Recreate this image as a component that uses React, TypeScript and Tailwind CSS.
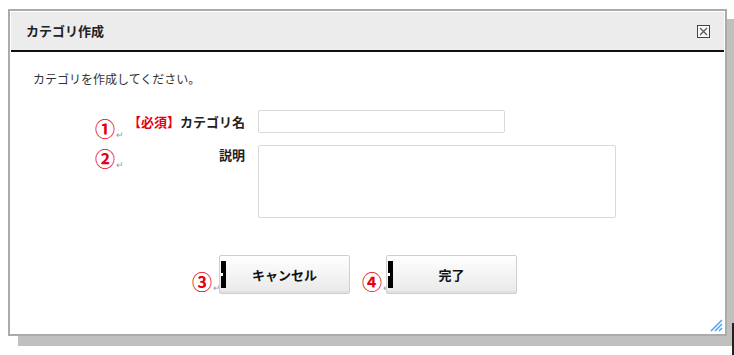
import React from "react";

const font = { fontFamily: '"Noto Sans CJK JP", "Liberation Sans", sans-serif' };

function Mark({ n }: { n: string }) {
  return (
    <span className="flex items-end leading-none">
      <span className="text-[20px] font-bold leading-none text-[#e60012]">{n}</span>
      <span className="ml-px text-[9px] leading-none text-[#999]">↵</span>
    </span>
  );
}

function CloseIcon() {
  return (
    <svg width="13" height="13" viewBox="0 0 13 13">
      <rect x="0.5" y="0.5" width="12" height="12" fill="#fafafa" stroke="#444" />
      <path d="M3 3 L10 10 M10 3 L3 10" stroke="#555" strokeWidth="1.2" />
    </svg>
  );
}

function Grip() {
  return (
    <svg width="13" height="13" viewBox="0 0 13 13">
      <path d="M1 12 L12 1 M5 12 L12 5 M9 12 L12 9" stroke="#58a8e8" strokeWidth="1.6" />
    </svg>
  );
}

function ActionButton({ label }: { label: string }) {
  return (
    <button className="flex h-[39px] w-[131px] items-stretch rounded-[2px] border border-[#cfcfcf] bg-gradient-to-b from-white to-[#e9e9e9] shadow-[inset_0_-2px_0_#e0e0e0]">
      <span className="relative my-[5px] ml-[1px] w-[5px] bg-black">
        <span className="absolute left-0 top-[12px] h-[3px] w-[2px] bg-white" />
      </span>
      <span className="flex flex-1 items-center justify-center pr-[6px] text-[13px] font-bold text-[#111]">
        {label}
      </span>
    </button>
  );
}

export default function App() {
  return (
    <div className="relative h-[355px] w-[734px] overflow-hidden bg-white" style={font}>
      <div className="ml-[8px] mt-[9px] h-[327px] w-[719px] border-2 border-[#ababab] bg-white p-px shadow-[10px_10px_0_#c0c0c0]">
        <div className="relative flex h-full flex-col">
          <div className="flex h-[40px] items-center justify-between border-b-2 border-[#111] bg-[#ececec] pl-[15px] pr-[14px]">
            <span className="text-[13px] font-bold text-[#222]">カテゴリ作成</span>
            <CloseIcon />
          </div>

          <div className="flex flex-col pl-[22px] pt-[19px]">
            <p className="text-[12px] leading-[16px] text-[#333]">カテゴリを作成してください。</p>

            <div className="mt-[23px] flex items-start">
              <div className="ml-[62px] h-[23px] w-[28px] pt-[9px]">
                <Mark n="①" />
              </div>
              <div className="flex h-[23px] w-[122px] items-center justify-end text-[13px] font-bold">
                <span className="text-[#e60012]">【必須】</span>
                <span className="text-[#222]">カテゴリ名</span>
              </div>
              <input className="ml-[13px] h-[23px] w-[247px] rounded-[2px] border border-[#d8d8de] bg-white outline-none" />
            </div>

            <div className="mt-[12px] flex items-start">
              <div className="ml-[62px] h-[23px] w-[28px] pt-[4px]">
                <Mark n="②" />
              </div>
              <div className="flex w-[122px] justify-end pt-[1px] text-[13px] font-bold leading-[18px] text-[#222]">
                説明
              </div>
              <textarea className="ml-[13px] h-[73px] w-[358px] resize-none rounded-[2px] border border-[#d8d8de] bg-white outline-none" />
            </div>

            <div className="mt-[37px] flex items-center">
              <div className="ml-[159px] h-[20px] w-[27px] pt-[7px]">
                <Mark n="③" />
              </div>
              <ActionButton label="キャンセル" />
              <div className="ml-[12px] h-[20px] w-[24px] pt-[7px]">
                <Mark n="④" />
              </div>
              <ActionButton label="完了" />
            </div>
          </div>

          <div className="absolute bottom-[1px] right-[1px]">
            <Grip />
          </div>
        </div>
      </div>
      <div className="absolute right-0 top-[323px] h-[32px] w-[2px] bg-[#222]" />
    </div>
  );
}
